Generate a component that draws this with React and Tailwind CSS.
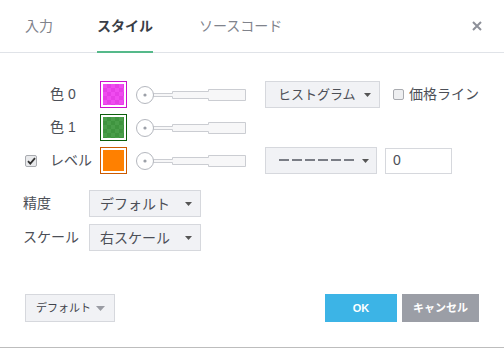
const FONT = { fontFamily: '"Liberation Sans", "Noto Sans CJK JP", sans-serif' };

function Caret({ color = "#555" }) {
  return (
    <svg width="7" height="4" viewBox="0 0 7 4">
      <path d="M0 0h7L3.5 4z" fill={color} />
    </svg>
  );
}

function Swatch({ border, fill, alt }) {
  const bg = alt
    ? { backgroundColor: fill, backgroundImage: `repeating-conic-gradient(${alt} 0 25%, transparent 0 50%)`, backgroundSize: "8px 8px" }
    : { backgroundColor: fill };
  return (
    <div className="w-[27px] h-[27px] p-px shrink-0" style={{ border: `1px solid ${border}` }}>
      <div className="w-full h-full border border-white" style={bg} />
    </div>
  );
}

function WidthSlider() {
  return (
    <svg width="111" height="20" viewBox="0 0 111 20" className="ml-[9px] shrink-0">
      <path d="M17 8.5H36.5V6.5H72.5V4.5H109.5V15.5H72.5V13.5H36.5V11.5H17" fill="#f7f7f8" stroke="#cbcdd2" />
      <circle cx="9" cy="10" r="8.5" fill="#fff" stroke="#b4b7be" />
      <circle cx="9" cy="10" r="1.6" fill="#9ca0a8" />
    </svg>
  );
}

function Select({ children, w, h = "h-[27px]", pl = "pl-3", text = "text-[14px]" }) {
  return (
    <div className={`${w} ${h} ${pl} pr-[8px] flex items-center justify-between bg-[#f1f2f5] border border-[#d6d8dd] ${text} text-[#4c4f57] shrink-0`}>
      <span className="leading-none">{children}</span>
      <Caret />
    </div>
  );
}

export default function App() {
  const rows = [
    { label: "色 0", sw: { border: "#cc11cc", fill: "#f04cf0", alt: "#e63fe6" } },
    { label: "色 1", sw: { border: "#0b5e0b", fill: "#4a9e4a", alt: "#3f943f" } },
    { label: "レベル", sw: { border: "#cc5a00", fill: "#ff8000" }, check: true },
  ];

  return (
    <div className="w-[504px] h-[348px] bg-white border-b border-[#bdbdbd] flex flex-col text-[#4c4f57]" style={FONT}>
      {/* Tabs */}
      <div className="h-[53px] shrink-0 flex border-b border-[#e0e3e8] pl-[25px] pr-[22px]">
        <div className="h-[53px] flex items-center text-[14px] text-[#80838c]">入力</div>
        <div className="h-[53px] ml-[44px] flex items-center text-[14px] font-bold text-[#3a3e47] border-b-2 border-[#55b98a] pt-[2px]">スタイル</div>
        <div className="h-[53px] ml-[46px] flex items-center text-[14px] text-[#80838c]">ソースコード</div>
        <div className="ml-auto h-[52px] flex items-center">
          <svg width="10" height="10" viewBox="0 0 10 10">
            <path d="M1 1l8 8M9 1l-8 8" stroke="#8d9099" strokeWidth="2" />
          </svg>
        </div>
      </div>

      {/* Color rows */}
      <div className="pl-[25px] pt-[28px] flex flex-col gap-[6px]">
        {rows.map((r, i) => (
          <div key={r.label} className="flex items-center h-[27px]">
            <div className="w-[25px] shrink-0 flex items-center">
              {r.check && (
                <div className="w-[12px] h-[12px] rounded-[2px] border border-[#a9abb0] bg-[#e9eaec] flex items-center justify-center">
                  <svg width="9" height="8" viewBox="0 0 9 8">
                    <path d="M1 4.2l2.3 2.4L8 1.2" fill="none" stroke="#333" strokeWidth="1.8" />
                  </svg>
                </div>
              )}
            </div>
            <div className="w-[50px] shrink-0 text-[14px]">{r.label}</div>
            <Swatch {...r.sw} />
            <WidthSlider />
            {i === 0 && (
              <>
                <div className="ml-[18px]">
                  <Select w="w-[115px]" text="text-[13px]">ヒストグラム</Select>
                </div>
                <div className="ml-[13px] w-[11px] h-[11px] rounded-[2px] border border-[#a9abb0] bg-[#eeeff1]" />
                <span className="ml-[5px] text-[14px]">価格ライン</span>
              </>
            )}
            {i === 2 && (
              <>
                <div className="ml-[18px] w-[112px] h-[27px] pl-[13px] pr-[7px] flex items-center justify-between bg-[#f1f2f5] border border-[#d6d8dd] shrink-0">
                  <svg width="76" height="3" viewBox="0 0 76 3">
                    {[0, 13, 26, 39, 52, 65].map((x) => (
                      <rect key={x} x={x} y="0" width="10" height="2" fill="#7a7d85" />
                    ))}
                  </svg>
                  <Caret />
                </div>
                <div className="ml-[8px] w-[67px] h-[26px] border border-[#d6d8dd] bg-white flex items-center pl-[7px] text-[14px]">0</div>
              </>
            )}
          </div>
        ))}
      </div>

      {/* Precision / scale */}
      <div className="pl-[23px] mt-[16px] flex flex-col gap-[7px]">
        {[["精度", "デフォルト"], ["スケール", "右スケール"]].map(([l, v]) => (
          <div key={l} className="flex items-center">
            <div className="w-[66px] shrink-0 text-[14px]">{l}</div>
            <Select w="w-[112px]" h="h-[27px]" pl="pl-[10px]">{v}</Select>
          </div>
        ))}
      </div>

      {/* Footer */}
      <div className="mt-auto mb-[25px] px-[25px] flex items-center">
        <div className="w-[90px] h-[28px] pl-[10px] pr-[9px] flex items-center justify-between bg-[#f1f2f5] border border-[#d6d8dd] text-[11px] text-[#3f424a]">
          <span>デフォルト</span>
          <svg width="9" height="5" viewBox="0 0 9 5">
            <path d="M0 0h9L4.5 5z" fill="#9a9ca3" />
          </svg>
        </div>
        <div className="ml-auto w-[72px] h-[28px] bg-[#3cb4e6] text-white text-[11px] font-bold flex items-center justify-center">OK</div>
        <div className="ml-[5px] w-[77px] h-[28px] bg-[#9b9ea6] text-white text-[11px] font-bold flex items-center justify-center">キャンセル</div>
      </div>
    </div>
  );
}
